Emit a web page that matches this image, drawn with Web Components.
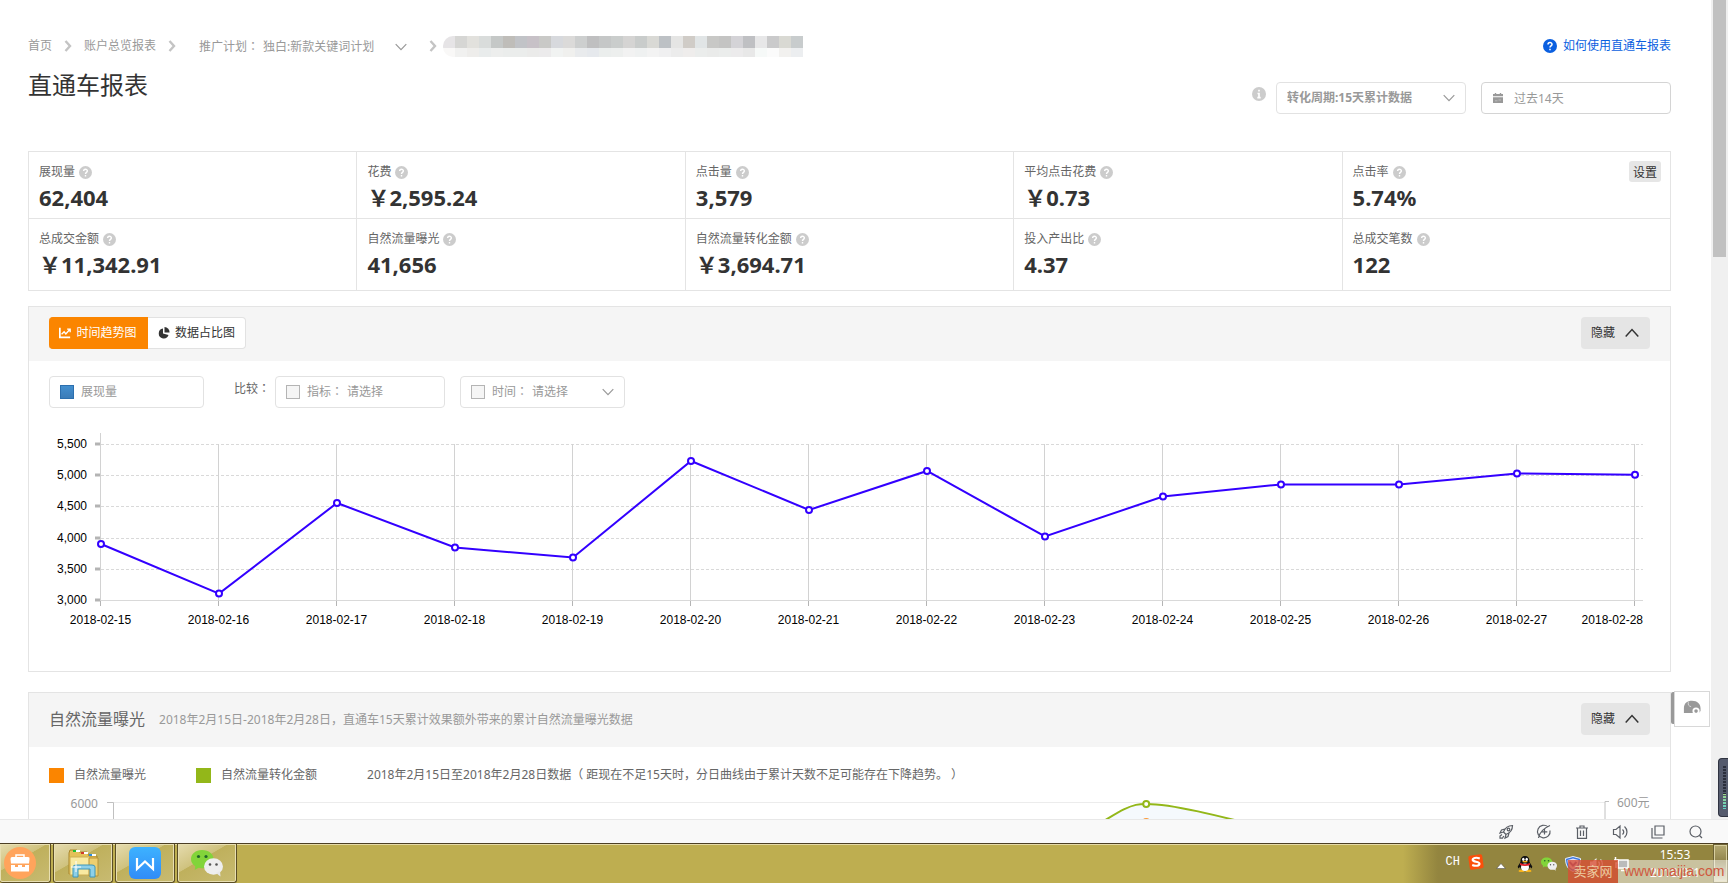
<!DOCTYPE html>
<html lang="zh-CN">
<head>
<meta charset="utf-8">
<title>直通车报表</title>
<style>
html,body{margin:0;height:100%}
body{font:12px/20px "Noto Sans","Noto Sans CJK SC",sans-serif;color:#666;background:#fff;overflow:hidden}
</style>
</head>
<body>
<desk-screen></desk-screen>
<script>
const ICONS = {
  sep:['0 0 8 12','<path d="M1.5 1 6 6 1.500 11" fill="none" stroke="#c4c4c4" stroke-width="2.400"/>'],
  down:['0 0 12 8','<path d="M.7 1.200 6 6.700 11.300 1.200" fill="none" stroke="currentColor" stroke-width="1.200"/>'],
  up:['0 0 14 10','<path d="M.7 8.500 7 1.500 13.300 8.500" fill="none" stroke="#333" stroke-width="1.500"/>'],
  help:['0 0 14 14','<circle cx="7" cy="7" r="7" fill="currentColor"/><path d="M5 5.500C5 2.900 9 2.900 9 5.400 9 6.800 7 6.900 7 8.500M7 9.800V11.300" fill="none" stroke="#fff" stroke-width="1.500"/>'],
  info:['0 0 14 14','<circle cx="7" cy="7" r="7" fill="#ccc"/><path d="M7 2.800V4.600M5.500 6.500H7V10.700M5.300 10.700H8.700" fill="none" stroke="#fff" stroke-width="1.700"/>'],
  cal:['0 0 12 12','<path d="M1 2H11V4.300H1ZM1 5.300H11V11H1ZM2.800 1H4.200V3H2.800ZM7.800 1H9.200V3H7.800Z" fill="#999"/><path d="M3 8.800H5.500M6.500 8H9" stroke="#ccc" stroke-width=".7"/>'],
  line:['0 0 14 12','<path d="M1 0V11H13" fill="none" stroke="#fff" stroke-width="2"/><path d="M3 7.500 6 4.500 8 7 12.500 2M9.500 1.500H13V5" fill="none" stroke="#fff" stroke-width="1.600"/>'],
  pie:['0 0 12 12','<path d="M5 1.500A5 5 0 1 0 10.500 8L5 6.500Z" fill="#333"/><path d="M6.500 0A5 5 0 0 1 11.500 5.500H6.500Z" fill="#333"/>'],
  rocket:['0 0 16 16','<path d="M14.500 1.500C10 1.500 7 4 5.500 8L8 10.500C12 9 14.500 6 14.500 1.500ZM7 5 3.500 6 2 9 5.500 8M11 9 10 12.500 7 14 8 10.500M4 10.500 2 12V14.200H4.500L5.700 12" /><circle cx="10.500" cy="5.500" r="1.300"/>'],
  boost:['0 0 16 16','<path d="M12 2.900A6.300 6.300 0 1 0 14 6.500M2.500 14C3.500 8.500 8 4 14 1.500M8.500 5V10.500M5.700 7.800H11.300"/>'],
  trash:['0 0 16 16','<path d="M2 4H14M6 4V2H10V4M3.500 4V14.300H12.500V4M6.500 6.500V12M9.500 6.500V12"/>'],
  sound:['0 0 16 16','<path d="M1.500 5.500V10.500H4L8 14V2L4 5.500ZM10.500 5.500C12 7 12 9 10.500 10.500M12.500 2.500C15.800 5.500 15.800 10.500 12.500 13.500"/>'],
  windows:['0 0 16 16','<path d="M5 2H14V11H5ZM2 4V14H12.500"/>'],
  search:['0 0 16 16','<circle cx="7.500" cy="7.500" r="5.500"/><path d="M11.500 11.500 14 14"/>'],
  bag:['0 0 32 32','<circle cx="16" cy="16" r="16" fill="#ffa45c"/><path d="M8 10H24Q26 10 25.500 12L25 16.500H7L6.500 12Q6.500 10 8 10ZM7 18H11V20H14V18H18V20H21V18H25V24.500H7Z" fill="#fff"/><path d="M12 10V8H20V10" fill="none" stroke="#fff" stroke-width="1.500"/>'],
  folder:['0 0 32 32','<path d="M2 6 3 3H10L12 5H20L22 9H30V27H2Z" fill="#e4c159" stroke="#a9862c"/><path d="M3 10H23V28H3Z" fill="#f9eaa0" stroke="#cdae52"/><path d="M22 11H31V29H22Z" fill="#edcf70" stroke="#b8943a"/><path d="M7 3H13V5H7ZM14 5H21V7H14ZM22 7H29V9H22Z" fill="#fff"/><path d="M6 3H9V5H6Z" fill="#20c030"/><path d="M14 5H17V7H14Z" fill="#d0392a"/><path d="M22 7H25V9H22Z" fill="#2b8de0"/><path d="M6 30V20Q6 18 9 18H25Q28 18 28 20V30H23V22H11V30Z" fill="#8dd0e8" stroke="#3f96b8"/><path d="M9 14V25M4 20H14" stroke="#fff"/>'],
  wps:['0 0 32 32','<defs><linearGradient id="g" x2="0" y2="1"><stop stop-color="#3db2ff"/><stop offset="1" stop-color="#318cf7"/></linearGradient></defs><rect width="32" height="32" rx="6" fill="url(#g)"/><path d="M8 11V22L16 14.500 24 22V11" fill="none" stroke="#fff" stroke-width="2.200"/>'],
  wechat:['0 0 32 28','<path d="M11 1C4.500 1 0 5 0 10 0 13 1.500 15.500 4.300 17.300L3.700 21 7.500 18.800C17 21 22.500 15 22.500 10 22.500 5 18 1 11 1Z" fill="#82d43a"/><circle cx="7.500" cy="7.500" r="1.600" fill="#22662a"/><circle cx="15" cy="7.500" r="1.600" fill="#22662a"/><ellipse cx="22.500" cy="17.500" rx="9.500" ry="8.200" fill="#eee"/><path d="M25 24 29.500 27.500 29 22Z" fill="#e8e8e8"/><circle cx="19" cy="15.500" r="1.300" fill="#555"/><circle cx="25.500" cy="15.500" r="1.300" fill="#555"/>'],
  sogou:['0 0 16 16','<rect x="1" y="1" width="14" height="14" rx="2" fill="#fb4f0a" transform="rotate(-8 8 8)"/><path d="M11.800 4.500C8 3 4.500 4 4.700 6 5 8.200 11.500 7.200 11.500 9.700 11.500 12 7.500 12.300 4.200 11" fill="none" stroke="#fff" stroke-width="2.100"/>'],
  tri:['0 0 10 6','<path d="M5 .5 9.500 5.500H.5Z" fill="#fff" stroke="#555" stroke-width=".6"/>'],
  qq:['0 0 16 16','<ellipse cx="4.500" cy="15" rx="3" ry="1.200" fill="#f6b21b"/><ellipse cx="11.500" cy="15" rx="3" ry="1.200" fill="#f6b21b"/><path d="M8 0C4.500 0 3.500 2.500 3.500 6L.7 10.500 1.200 12.500 3 11C4 15.500 12 15.500 13 11L14.800 12.500 15.300 10.500 12.500 6C12.500 2.500 11.500 0 8 0Z" fill="#111"/><ellipse cx="8" cy="11.300" rx="4" ry="3.700" fill="#fff"/><ellipse cx="6.300" cy="3.300" rx="1.200" ry="1.600" fill="#fff"/><ellipse cx="9.700" cy="3.300" rx="1.200" ry="1.600" fill="#fff"/><ellipse cx="8" cy="5.600" rx="2.700" ry=".9" fill="#f6b21b"/><path d="M3 7C6 8.500 10 8.500 13 7V9C10 10.200 6 10.200 3 9Z" fill="#e3202b"/>'],
  shield:['0 0 16 16','<path d="M8 .5 15.500 2.500C15.500 9 13 13.500 8 15.500 3 13.500 .5 9 .5 2.500Z" fill="#3b77df" stroke="#e9f0ff"/><path d="M8 2.500 13.500 4C13.500 8.500 11.500 12 8 13.500 4.500 12 2.500 8.500 2.500 4Z" fill="#e7dff5"/><path d="M4.500 6 8 9.500 11.500 6" fill="none" stroke="#7a4d9b" stroke-width="2"/>'],
  vol:['0 0 16 16','<path d="M1 5.500V10.500H3.500L7.500 14V2L3.500 5.500Z" fill="#eee"/><path d="M9.500 5.500C10.800 7 10.800 9 9.500 10.500M11.500 3.500C14 6 14 10 11.500 12.500" fill="none" stroke="#eee" stroke-width="1.200"/>'],
  net:['0 0 16 16','<rect x="5" y="4" width="10" height="8" fill="#777" stroke="#fff" stroke-width="1.500"/><path d="M8 14.500H13M2.500 1V5M1 4H5V7H3V12" fill="none" stroke="#fff" stroke-width="1.500"/>'],
  ele:['0 0 20 16','<path d="M1 15V9C1 3 5 .5 10 .5 16 .5 19.500 4 19.500 9V12L17.500 14H1Z" fill="#999"/><path d="M6 2C5 5 7 7 9 7" fill="none" stroke="#ddd"/><circle cx="14.500" cy="12" r="3" fill="#999" stroke="#fff" stroke-width="2"/>']
};

/* Registers an element with its own shadow tree. */
function define(name, css, html, setup) {
  const tpl = document.createElement('template');
  customElements.define(name, class extends HTMLElement {
    connectedCallback() {
      if (this.shadowRoot) return;
      const root = this.attachShadow({mode:'open'});
      tpl.innerHTML = '<style>*{box-sizing:border-box}' + css + '</style>' + (typeof html === 'function' ? html(this) : html);
      root.append(tpl.content.cloneNode(true));
      if (setup) setup(this, root);
    }
  });
}

define('ui-icon', ':host{display:block;flex:none;line-height:0}svg{display:block;width:100%;height:100%}', el => {
  const [box, body] = ICONS[el.getAttribute('name')];
  const outline = el.hasAttribute('outline') ? 'fill="none" stroke="#5b5f66" stroke-width="1.200"' : '';
  return `<svg viewBox="${box}" ${outline} aria-hidden="true">${body}</svg>`;
});

/* Label text followed by a full-width colon centred in its cell. */
define('colon-text', ':host{display:inline}span{font-family:"Noto Sans CJK JP",sans-serif;line-height:1}', '<slot></slot><span lang="ja">：</span>');

define('crumb-bar', `
:host{display:flex;align-items:center;height:24px;color:#999}
a{color:#999;text-decoration:none}
ui-icon[name=sep]{width:8px;height:12px;margin:0 12px}
label{display:flex;align-items:center;margin-left:11px;padding-top:2px;gap:4px}
select{appearance:none;border:0;background:none;font:inherit;color:inherit;padding:0;margin:0}
ui-icon[name=down]{width:12px;height:8px;margin:2px 10px 0 20px}
.mosaic{display:grid;grid-template-columns:repeat(30,12px);grid-template-rows:12px 9px;height:21px;margin-left:-6px;border-radius:10px 0 0 10px;overflow:hidden}`,
`<a href="#">首页</a><ui-icon name="sep"></ui-icon><a href="#">账户总览报表</a><ui-icon name="sep"></ui-icon>
<label><colon-text>推广计划</colon-text><select><option>独白:新款关键词计划</option></select></label>
<ui-icon name="down"></ui-icon><ui-icon name="sep"></ui-icon><div class="mosaic"></div>`,
(el, root) => {
  const top = 'e6e4e6 d6d6d4 e2e1dd d9dcdb c5c8c7 bfbdb9 c1c3c7 c7c1c7 c9c9c7 d7d9dd dbdad9 cdcfcf bfbfc0 c5c7c7 cacdcc d5d4d3 c9cccb d9d9d5 bdc1c5 e5e5e4 d0ccc7 e1e5e6 c8c8c6 c4c4c3 d4d3d7 bfc0c3 e7e7e8 cacacb d9d9d3 c8cccd'.split(' ');
  const low = 'f9f8f7 f1f1f0 eeedeb e9ecec edeeed ebedec ebedec ebebea ecebec f1f3f2 f0f0ee e9ebed e6e9ed ebeeed edefee f2f2f2 eff1f1 f3f3f3 f0f0f1 ececec efedec ebedec eaebea ebedec ecebec e8e8e8 f6f9f8 fbfbfb f2f1ef eceef0'.split(' ');
  root.querySelector('.mosaic').innerHTML = [...top, ...low].map(c => `<i style="background:#${c}"></i>`).join('');
});

define('page-head', `
:host{display:flex;justify-content:space-between;padding:34px 0 37px}
h1{margin:11px 0 0;font-size:24px;line-height:32px;font-weight:400;color:#333}
.side{display:flex;flex-direction:column;align-items:flex-end;gap:24px}
a{display:flex;align-items:center;gap:6px;height:24px;color:#0a5fe0;text-decoration:none}
a ui-icon{width:14px;height:14px;color:#0a5fe0}
.filters{display:flex;align-items:center}
.filters>ui-icon{width:14px;height:14px;margin:0 10px 8px 0}
.box{display:flex;align-items:center;width:190px;height:32px;border:1px solid #e2e2e2;border-radius:4px;padding:0 10px;color:#999}
.date{margin-left:15px;border-color:#d4d4d4;gap:10px}
.date input{padding-top:2px}
.box ui-icon{width:12px;height:12px}
.box ui-icon[name=down]{height:8px}
select,input{appearance:none;flex:1;min-width:0;border:0;background:none;padding:0;margin:0;font:inherit;color:inherit;outline:0}
select{font-weight:700}`,
`<div><crumb-bar></crumb-bar><h1>直通车报表</h1></div>
<div class="side"><a href="#"><ui-icon name="help"></ui-icon>如何使用直通车报表</a>
<div class="filters"><ui-icon name="info"></ui-icon>
<label class="box"><select aria-label="转化周期"><option>转化周期:15天累计数据</option></select><ui-icon name="down"></ui-icon></label>
<label class="box date"><ui-icon name="cal"></ui-icon><input aria-label="日期" value="过去14天" readonly></label></div></div>`);

define('metric-cell', `
:host{display:block;padding:10px 10px 0 10px;height:67px;border-left:1px solid #e4e4e4;border-bottom:1px solid #e4e4e4;position:relative}
.name{display:flex;align-items:center;gap:4px;height:20px}
ui-icon{width:13px;height:13px;color:#ccc}
.value{margin-top:1px;font-size:22px;line-height:28px;font-weight:700;color:#333}
::slotted(button){position:absolute;right:9px;top:9px;width:32px;height:21px;border:0;border-radius:3px;padding:0;background:#e6e6e6;color:#333;font:12px/20px "Noto Sans CJK SC",sans-serif}`,
el => `<div class="name"><span>${el.getAttribute('label')}</span><ui-icon name="help"></ui-icon></div><div class="value">${el.getAttribute('value')}</div><slot></slot>`);

define('metric-grid', `
:host{display:grid;grid-template-columns:repeat(5,1fr);border-top:1px solid #e4e4e4;border-right:1px solid #e4e4e4;margin-bottom:15px}
metric-cell:nth-of-type(n+6){height:72px}`,
[['展现量','62,404'],['花费','￥2,595.24'],['点击量','3,579'],['平均点击花费','￥0.73'],['点击率','5.74%'],['总成交金额','￥11,342.91'],['自然流量曝光','41,656'],['自然流量转化金额','￥3,694.71'],['投入产出比','4.37'],['总成交笔数','122']]
.map(([l,v],i) => `<metric-cell label="${l}" value="${v}">${i === 4 ? '<button type="button">设置</button>' : ''}</metric-cell>`).join(''));

define('report-panel', `
:host{display:block;border:1px solid #e4e4e4;margin-bottom:20px}
header{display:flex;justify-content:space-between;align-items:center;background:#f5f5f5;padding:10px 20px 12px}
button{display:flex;align-items:center;justify-content:space-between;width:69px;height:32px;padding:0 11px 0 10px;border:0;border-radius:4px;background:#e5e5e5;color:#333;font:inherit}
ui-icon{width:14px;height:10px}`,
`<header><slot name="head"></slot><button type="button">隐藏<ui-icon name="up"></ui-icon></button></header><slot></slot>`);

define('view-tabs', `
:host{display:flex}
button{display:flex;align-items:center;justify-content:center;gap:5px;height:32px;width:98px;padding:0;border:1px solid #e2e2e2;border-left:0;border-radius:0 4px 4px 0;background:#fff;color:#333;font:inherit}
button[aria-pressed=true]{width:99px;background:#fb8500;border-color:#fb8500;color:#fff;border-radius:4px 0 0 4px}
ui-icon{width:12px;height:12px}`,
`<button type="button" aria-pressed="true"><ui-icon name="line"></ui-icon>时间趋势图</button><button type="button" aria-pressed="false"><ui-icon name="pie"></ui-icon>数据占比图</button>`);

define('compare-bar', `
:host{display:flex;align-items:center;height:47px;padding:15px 20px 0}
.box{display:flex;align-items:center;height:32px;border:1px solid #e2e2e2;border-radius:4px;padding:0 10px;color:#999}
.box label{display:flex;align-items:center;gap:7px}
input{appearance:none;width:14px;height:14px;margin:0;border:1px solid #b4b4b4;background:#f5f5f5}
input:checked{border-color:#2c6fae;background:linear-gradient(#438fcf,#3b7cb8)}
select{appearance:none;flex:1;min-width:0;border:0;background:none;padding:0;margin:0 0 0 4px;font:inherit;color:inherit}
.shown{width:155px}.shown select{margin-left:7px}.kind{width:170px}.time{width:165px;margin-left:15px}
.tag{margin:0 5px 6px 30px}
ui-icon{width:12px;height:8px}`,
`<div class="box shown"><input type="checkbox" checked aria-label="显示展现量"><select aria-label="主指标"><option>展现量</option></select></div>
<span class="tag"><colon-text>比较</colon-text></span>
<div class="box kind"><label><input type="checkbox"><colon-text>指标</colon-text></label><select aria-label="指标"><option>请选择</option></select></div>
<div class="box time"><label><input type="checkbox"><colon-text>时间</colon-text></label><select aria-label="时间"><option>请选择</option></select><ui-icon name="down"></ui-icon></div>`);

/* Keeps an SVG drawing as wide as its host. */
function fluid(el, root, draw) {
  const svg = root.querySelector('svg');
  const paint = () => { svg.innerHTML = draw(el.clientWidth); };
  paint();
  new ResizeObserver(paint).observe(el);
}

define('trend-chart', `
:host{display:block;height:263px}
svg{display:block;width:100%;height:100%}
text{font:12px "Liberation Sans",sans-serif;fill:#000}`,
'<svg role="img" aria-label="展现量趋势"></svg>',
(el, root) => fluid(el, root, w => {
  const vals = [3898,3103,4555,3842,3680,5228,4443,5068,4018,4658,4852,4852,5028,5009];
  const left = 72, base = 192, step = (w - 35 - left) / 13;
  const Y = v => base - (v - 3000) * 156 / 2500, X = i => left + i * step;
  let s = '';
  for (let v = 3000; v <= 5500; v += 500) {
    const y = Math.round(Y(v));
    s += `<path d="M${left} ${y+.5}H${w-27}" stroke="#d9d9d9" ${v > 3000 ? 'stroke-dasharray="3 2"' : ''}/><path d="M66 ${y}H${left}" stroke="#b4b4b4" stroke-width="3"/><text x="58" y="${y+4}" text-anchor="end">${v.toLocaleString('en-US')}</text>`;
  }
  vals.forEach((v, i) => {
    const x = Math.round(X(i)) - .5;
    s += `<path d="M${x} ${i ? 36 : 25}V198" stroke="#d2d2d2"/><path d="M${x} 193V198" stroke="#b4b4b4"/>`;
    s += i < 13 ? `<text x="${x}" y="216" text-anchor="middle">2018-02-${15+i}</text>` : `<text x="${w-27}" y="216" text-anchor="end">2018-02-28</text>`;
  });
  s += `<path d="M${vals.map((v,i) => X(i)+' '+Y(v)).join('L')}" fill="none" stroke="#30f" stroke-width="2"/>`;
  vals.forEach((v, i) => { s += `<circle cx="${X(i)}" cy="${Y(v)}" r="3" fill="#fff" stroke="#30f" stroke-width="2"/>`; });
  return s;
}));

define('flow-title', `
:host{display:flex;align-items:center;gap:14px;color:#999}
h2{margin:0;font-size:16px;line-height:24px;font-weight:400;color:#666}
span{padding-top:2px}`,
'<h2>自然流量曝光</h2><span>2018年2月15日-2018年2月28日，直通车15天累计效果额外带来的累计自然流量曝光数据</span>');

define('flow-legend', `
:host{display:flex;align-items:center;height:36px;padding:20px 20px 0}
span{display:flex;align-items:center;gap:10px;margin-right:50px}
i{width:15px;height:15px;background:#fb8500}
.b i{background:#93b719}`,
'<span><i></i>自然流量曝光</span><span class="b"><i></i>自然流量转化金额</span><span>2018年2月15日至2018年2月28日数据（ 距现在不足15天时，分日曲线由于累计天数不足可能存在下降趋势。 ）</span>');

define('flow-chart', `
:host{display:block;height:220px}
svg{display:block;width:100%;height:100%}
text{font:12px "Noto Sans","Noto Sans CJK SC",sans-serif;fill:#999}`,
'<svg role="img" aria-label="自然流量曝光与转化金额"></svg>',
(el, root) => fluid(el, root, w => {
  const r = w - 65, px = 84 + (r - 84) * .6925;
  const curve = `${px-90} 67C${px-20} 24 ${px-17} 21 ${px} 21 ${px+24} 21 ${px+64} 30 ${px+150} 53`;
  return `<path d="M84 19.500H${r}" stroke="#ececec"/><path d="M78 19.500H84.500V220M${r+4} 18.500H${r}V220" fill="none" stroke="#c0c0c0"/>
  <text x="69" y="25" text-anchor="end">6000</text><text x="${r+12}" y="24">600元</text>
  <path d="M${curve}V220H${px-90}Z" fill="#f5f9fd"/><path d="M${curve}" fill="none" stroke="#93b719" stroke-width="2"/>
  <circle cx="${px}" cy="21" r="3" fill="#fff" stroke="#93b719" stroke-width="2"/><circle cx="${px}" cy="39" r="3" fill="#fff" stroke="#fb9a3a" stroke-width="2"/>`;
}));

define('page-scroll', `
:host{display:block;width:17px;background:#f0f0f0;padding:0 2px}
div{height:257px;background:#c1c1c1}`, '<div></div>');

define('side-dock', `
:host{display:flex;align-items:flex-start;position:absolute;right:18px;bottom:92px}
i{width:3px;height:32px;margin-top:1px;background:#999;border-radius:2px 0 0 2px}
button{display:flex;justify-content:center;align-items:center;width:36px;height:36px;padding:0 0 3px;border:1px solid #d8d8d8;background:#fff}
ui-icon{width:18px;height:15px}`, '<i></i><button type="button" aria-label="客服"><ui-icon name="ele"></ui-icon></button>');

define('level-meter', `
:host{display:block;position:absolute;right:0;bottom:2px;width:10px;height:59px;padding:7px 2px 7px 4px;border:1px solid #2f3340;border-right:0;border-radius:4px 0 0 4px;background:#555b6d}
div{height:100%;background:repeating-linear-gradient(transparent 0 2px,#555b6d 2px 3px),linear-gradient(#2b2f3c 66%,#9fd88a 66%,#5fd0c8)}`, '<div></div>');

define('tool-strip', `
:host{display:flex;justify-content:flex-end;align-items:center;gap:22px;height:24px;padding:0 24px 0 0;border-top:1px solid #e8e8e8;background:#f9f9f9}
button{border:0;padding:0;background:none}
ui-icon{width:16px;height:16px}`,
[['rocket','加速'],['boost','极速'],['trash','清理'],['sound','声音'],['windows','窗口'],['search','缩放']].map(([n,l]) => `<button type="button" aria-label="${l}"><ui-icon name="${n}" outline></ui-icon></button>`).join(''));

define('task-bar', `
:host{display:flex;justify-content:space-between;position:relative;height:40px;border-top:1px solid #4c3f24;background:linear-gradient(#e6dba8 0 1px,transparent 1px),linear-gradient(90deg,#beae50 calc(100% - 325px),#93853f calc(100% - 290px))}
.apps{display:flex;gap:2px}
.apps button{display:flex;align-items:center;justify-content:center;width:60px;height:39px;padding:0;border:1px solid #5b4e25;border-top:0;border-radius:0 0 3px 3px;box-shadow:inset 0 0 0 1px #e8dfb2;background:linear-gradient(150deg,#e6dcaf 0,#cfc27e 40%,#bfb05c 41%,#c8bb72)}
.apps button:first-child{width:51px;border-left:0;padding-right:10px}
.apps ui-icon{width:32px;height:32px}
.apps ui-icon[name=wechat]{height:28px}
.tray{display:flex;align-items:center;color:#fff}
.tray ui-icon{width:16px;height:16px;margin-right:8px}
.tray ui-icon[name=tri]{width:10px;height:6px;margin:4px 11px 0 4px}
.tray ui-icon[name=sogou],.ime{margin-bottom:4px}
.ime{font:12px/16px "Liberation Mono",monospace;margin-right:8px}
.clock{width:76px;text-align:center;line-height:18px;height:39px;padding-top:2px}
.desk{width:15px;height:39px;padding:0;border:1px solid #6d6233;box-shadow:inset 0 0 0 1px #d8cf9f;background:linear-gradient(#b5aa72,#90834a 45%,#ddd7b6)}
.mark{position:absolute;right:0;bottom:0;display:flex;height:23px;line-height:23px;font-size:13px}
.mark b{width:50px;text-align:center;font-weight:400;background:rgba(216,79,54,.8);color:#eccaa0}
.mark span{width:110px;padding-left:6px;background:rgba(255,255,255,.5);color:#d0583e;font-family:"Liberation Sans",sans-serif;font-size:14px}`,
`<div class="apps">${[['bag','工作台'],['folder','资源管理器'],['wps','文档'],['wechat','微信']].map(([n,l]) => `<button type="button" aria-label="${l}"><ui-icon name="${n}"></ui-icon></button>`).join('')}</div>
<div class="tray"><span class="ime">CH</span><ui-icon name="sogou"></ui-icon><ui-icon name="tri"></ui-icon><ui-icon name="qq"></ui-icon><ui-icon name="wechat"></ui-icon><ui-icon name="shield"></ui-icon><ui-icon name="vol"></ui-icon><ui-icon name="net"></ui-icon>
<div class="clock"><div>15:53</div><div>2018/3/1</div></div><button type="button" class="desk" aria-label="显示桌面"></button></div>
<div class="mark"><b>卖家网</b><span>www.maijia.com</span></div>`);

define('desk-screen', `
:host{display:flex;flex-direction:column;height:100vh}
.view{display:flex;flex:1;min-height:0;overflow:hidden;position:relative}
main{flex:1;min-width:0;padding:0 40px 0 28px}`,
`<div class="view"><main><page-head></page-head><metric-grid></metric-grid>
<report-panel><view-tabs slot="head"></view-tabs><compare-bar></compare-bar><trend-chart></trend-chart></report-panel>
<report-panel><flow-title slot="head"></flow-title><flow-legend></flow-legend><flow-chart></flow-chart></report-panel></main>
<page-scroll></page-scroll><side-dock></side-dock><level-meter></level-meter></div>
<tool-strip></tool-strip><task-bar></task-bar>`);
</script>
</body>
</html>
